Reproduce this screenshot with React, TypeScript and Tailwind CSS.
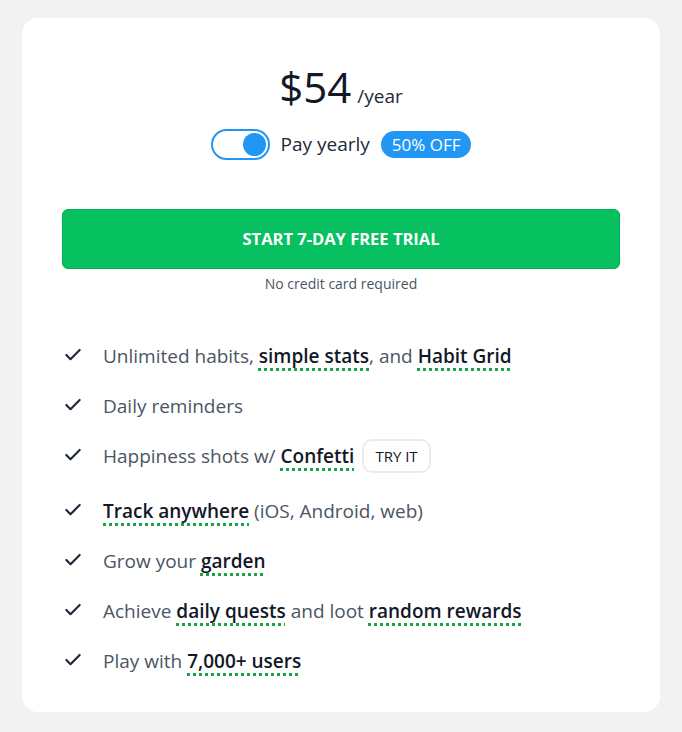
import { Check } from 'lucide-react'

type Part = string | { hl: string }

const features: Part[][] = [
  ['Unlimited habits, ', { hl: 'simple stats' }, ', and ', { hl: 'Habit Grid' }],
  ['Daily reminders'],
  ['Happiness shots w/ ', { hl: 'Confetti' }],
  [{ hl: 'Track anywhere' }, ' (iOS, Android, web)'],
  ['Grow your ', { hl: 'garden' }],
  ['Achieve ', { hl: 'daily quests' }, ' and loot ', { hl: 'random rewards' }],
  ['Play with ', { hl: '7,000+ users' }],
]

function Highlight({ children }: { children: string }) {
  return (
    <span className="font-semibold text-[#111827] underline decoration-dotted decoration-[#16a34a] decoration-[3px] underline-offset-[5px]">
      {children}
    </span>
  )
}

export default function App() {
  return (
    <div
      className="min-h-[732px] bg-[#f2f2f2] px-[22px] pt-[18px] pb-[20px]"
      style={{ fontFamily: '"Open Sans", "Noto Sans", sans-serif' }}
    >
      <div className="rounded-[16px] bg-white px-[40px] pt-[48px] pb-[14px]">
        <div className="flex items-end justify-center gap-[6px] text-[#111827]">
          <span className="text-[42px] leading-none">$54</span>
          <span className="pb-[2px] text-[19px] leading-none text-[#1f2937]">/year</span>
        </div>

        <div className="mt-[21px] flex items-center justify-center gap-[11px]">
          <div className="flex h-[31px] w-[59px] items-center justify-end rounded-full border-2 border-[#2196f3] bg-white pr-[2px]">
            <div className="h-[23px] w-[23px] rounded-full bg-[#2196f3]" />
          </div>
          <span className="text-[19px] text-[#1f2937]">Pay yearly</span>
          <span className="rounded-full bg-[#2196f3] px-[11px] py-[1px] text-[17px] text-white">50% OFF</span>
        </div>

        <button className="mt-[49px] flex h-[60px] w-full items-center justify-center rounded-[6px] border border-[#06a954] bg-[#07c160] text-[16.5px] font-bold text-white">
          START 7-DAY FREE TRIAL
        </button>
        <p className="mt-[4px] text-center text-[14px] text-[#4b5563]">No credit card required</p>

        <ul className="mt-[49px] flex flex-col">
          {features.map((parts, i) => (
            <li key={i} className={`flex items-start gap-[20px] ${i === 2 ? 'h-[55px]' : 'h-[50px]'}`}>
              <Check className="mt-[2px] ml-[1px] h-[20px] w-[20px] shrink-0 text-[#1f2937]" strokeWidth={2.6} />
              <div className="flex items-center gap-[8px] text-[19px] leading-[26px] text-[#4b5563]">
                <span>
                  {parts.map((p, j) =>
                    typeof p === 'string' ? <span key={j}>{p}</span> : <Highlight key={j}>{p.hl}</Highlight>,
                  )}
                </span>
                {i === 2 && (
                  <span className="-my-[4px] rounded-[10px] border-2 border-[#ececec] px-[11px] py-[5px] text-[15px] leading-[20px] text-[#111827]">
                    TRY IT
                  </span>
                )}
              </div>
            </li>
          ))}
        </ul>
      </div>
    </div>
  )
}
